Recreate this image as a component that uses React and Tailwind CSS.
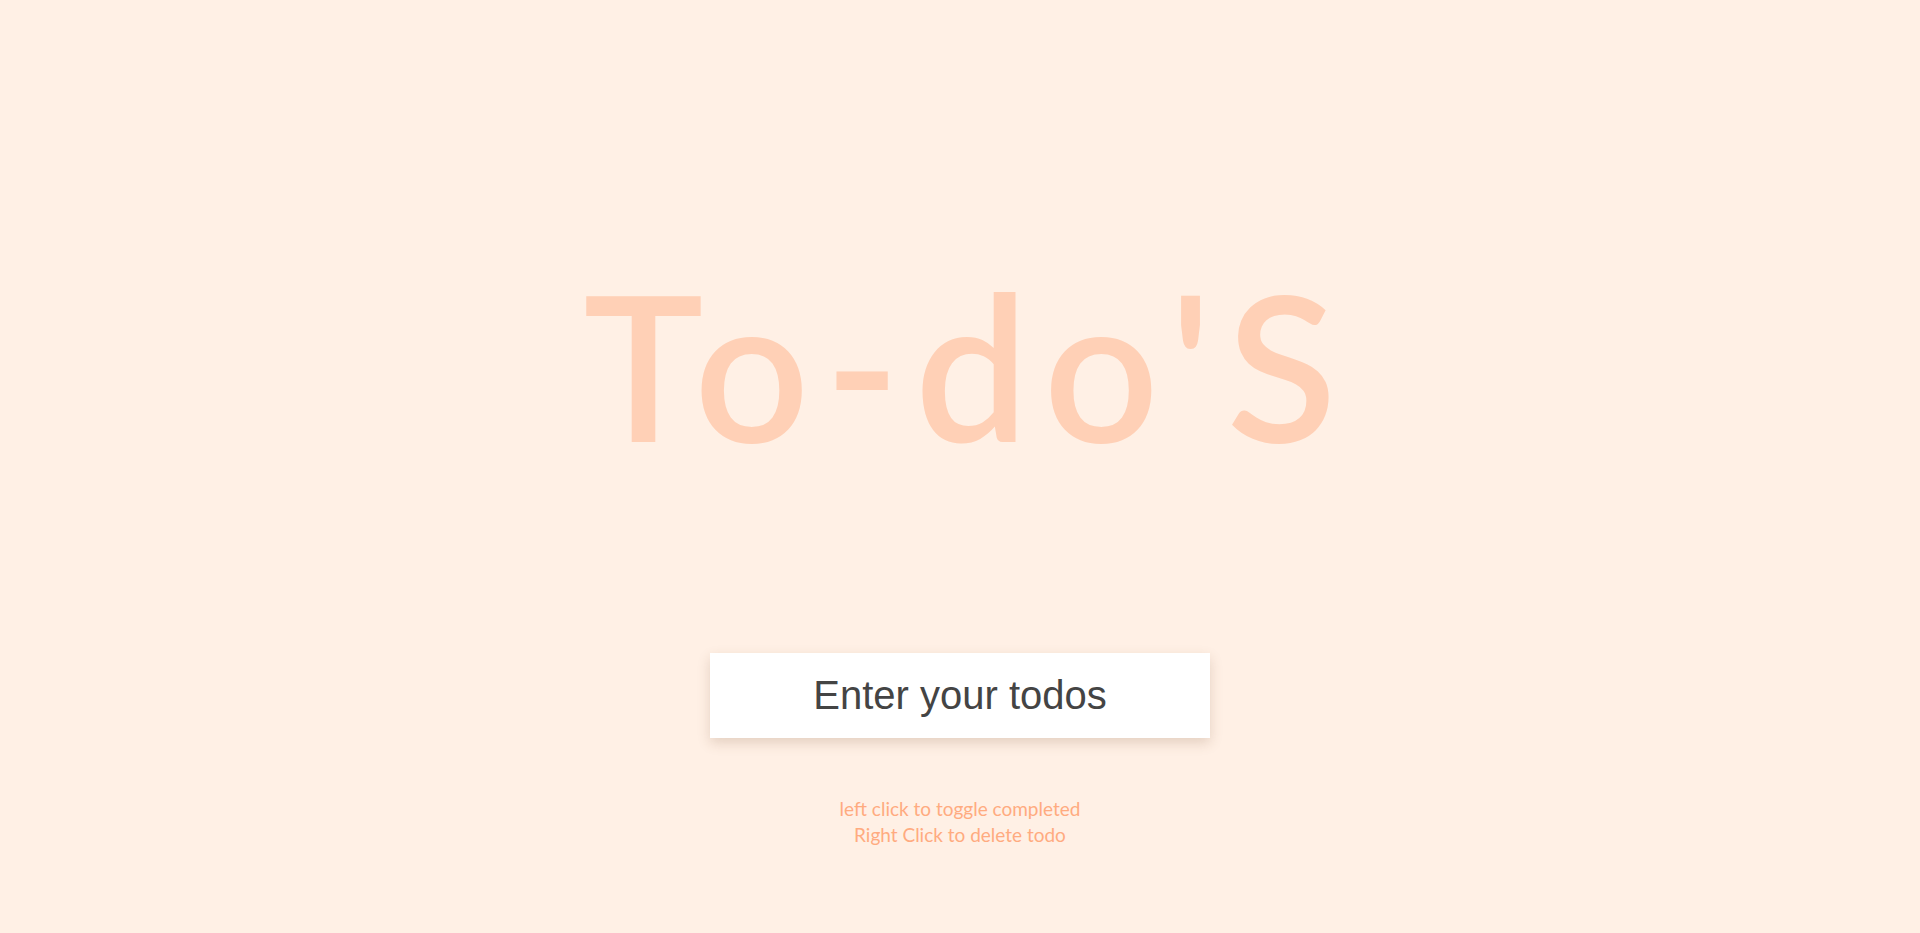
import { useState } from 'react';

export default function App() {
  const [todo, setTodo] = useState('');

  return (
    <div className="min-h-screen bg-[#fff0e5] flex flex-col items-center" style={{ fontFamily: 'Lato, "Noto Sans", sans-serif' }}>
      <h1 className="mt-[263px] text-[202px] leading-none font-semibold text-[#ffd0b6] tracking-[15px] pl-[15px] select-none">
        To-do'S
      </h1>
      <form onSubmit={(e) => e.preventDefault()} className="mt-[188px]">
        <input
          className="w-[500px] h-[85px] bg-white text-center text-[40px] text-[#444] placeholder:text-[#444] outline-none shadow-[0_5px_12px_rgba(120,80,50,0.2)]"
          style={{ fontFamily: '"Liberation Sans", Arial, sans-serif' }}
          placeholder="Enter your todos"
          value={todo}
          onChange={(e) => setTodo(e.target.value)}
        />
      </form>
      <div className="mt-[58px] text-center text-[19px] leading-[26px] text-[#ffab80]">
        <p>left click to toggle completed</p>
        <p>Right Click to delete todo</p>
      </div>
    </div>
  );
}
